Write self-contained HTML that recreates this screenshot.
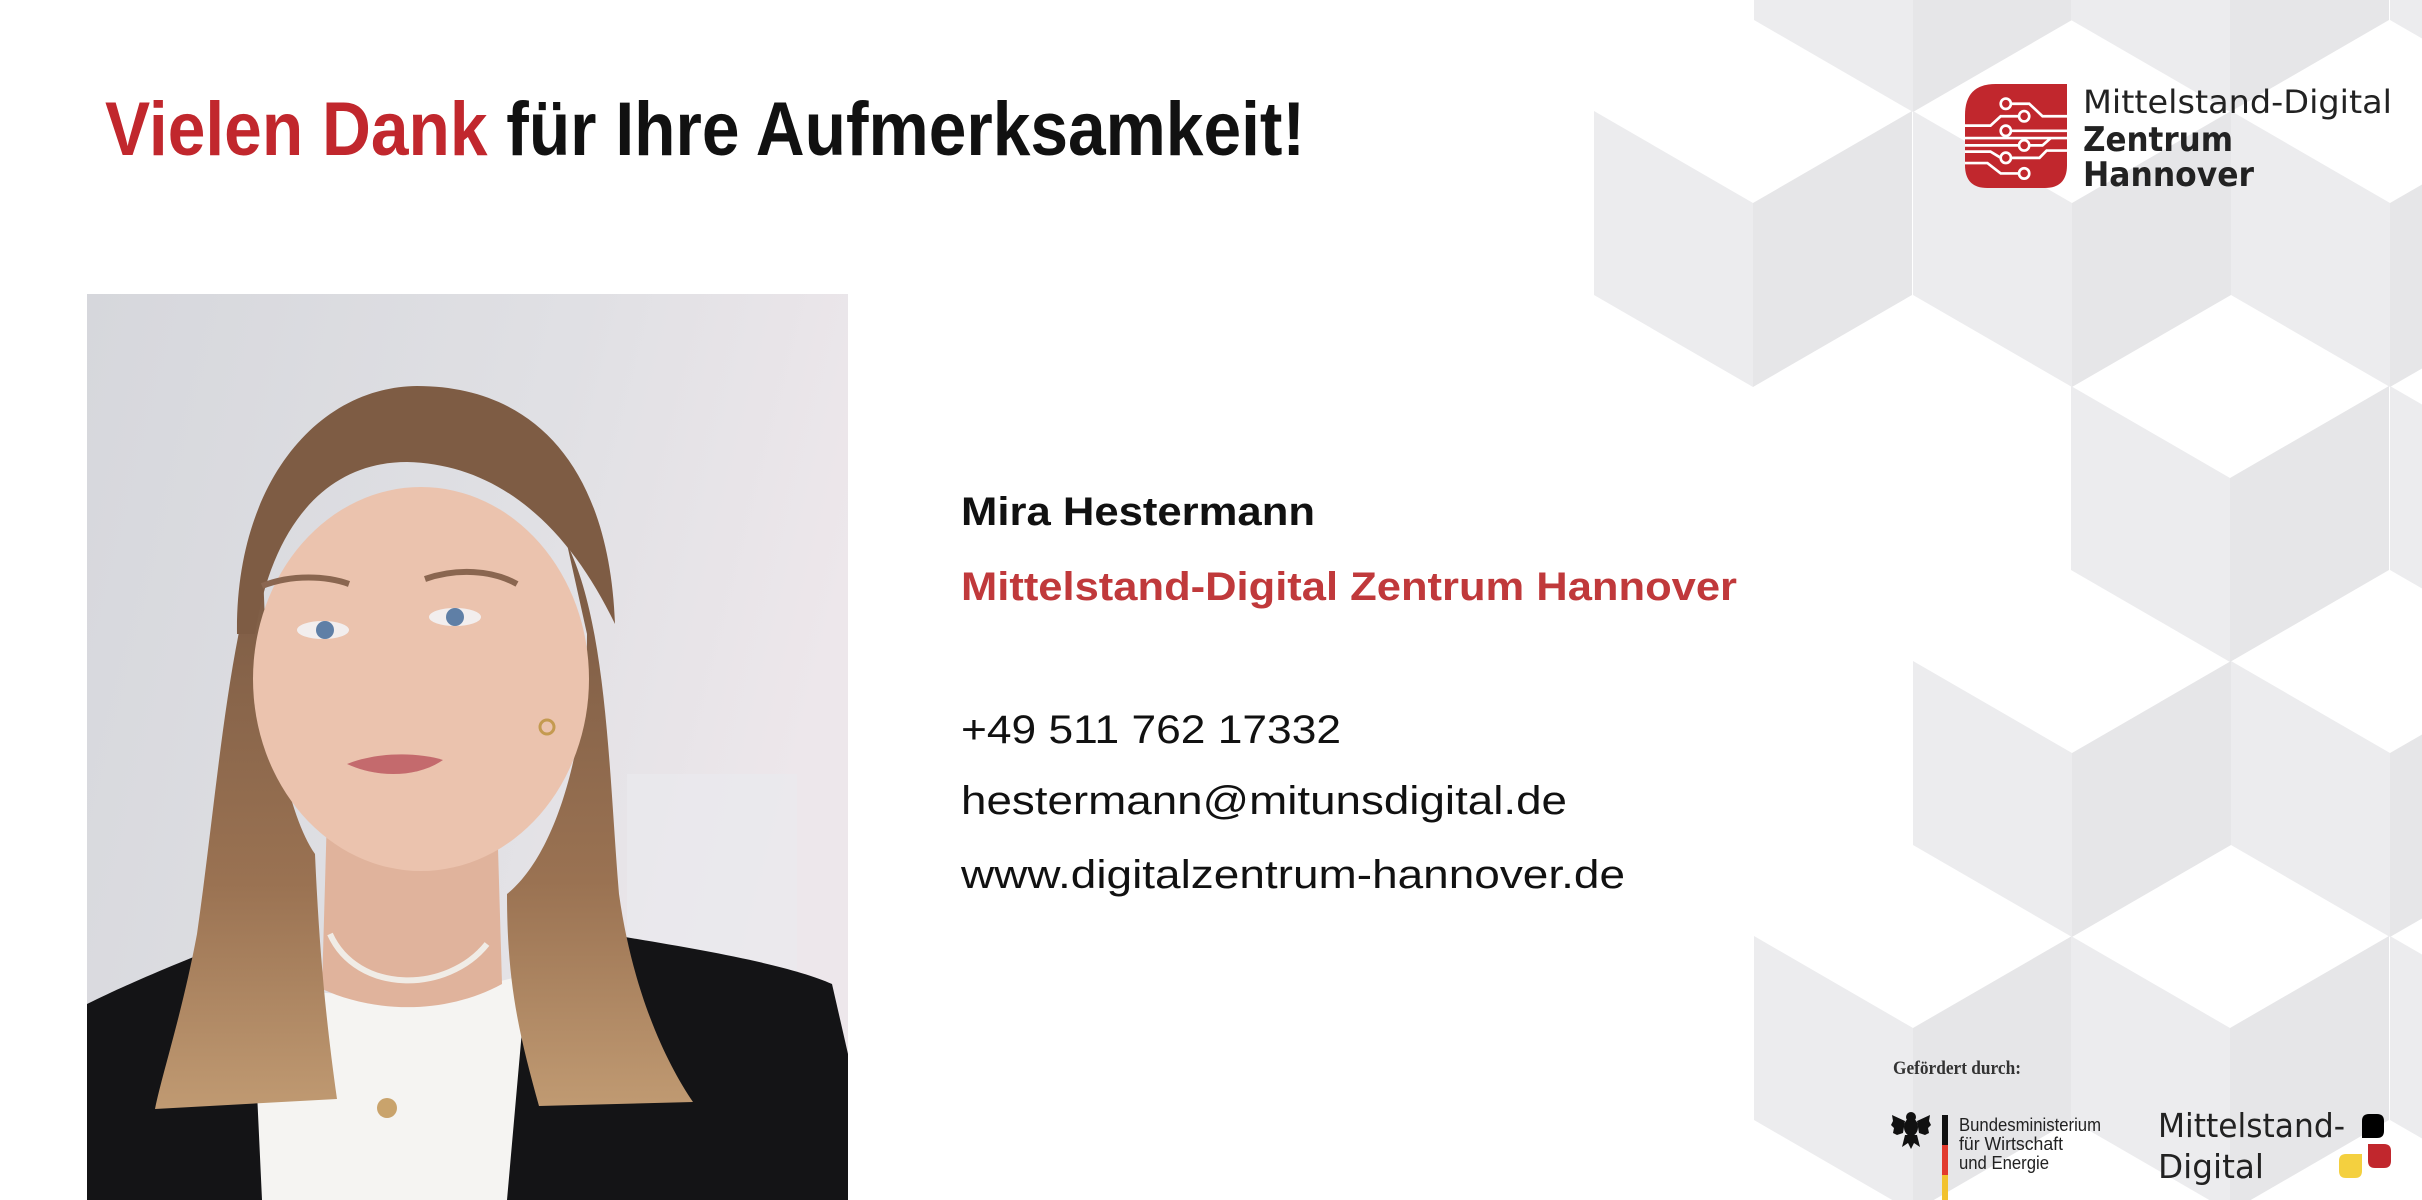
<!DOCTYPE html>
<html><head><meta charset="utf-8"><style>
html,body{margin:0;padding:0;background:#fff;width:2422px;height:1200px;overflow:hidden}
svg{display:block}
</style></head><body>
<svg width="2422" height="1200" viewBox="0 0 2422 1200" xmlns="http://www.w3.org/2000/svg">
<defs>
<g id="cube">
<polygon points="-159,92 0,184 0,368 -159,276" fill="#ececee"/>
<polygon points="0,184 159,92 159,276 0,368" fill="#e6e6e8"/>
</g>
<linearGradient id="bg" x1="0" y1="0" x2="1" y2="0.3">
<stop offset="0" stop-color="#d6d7dc"/><stop offset="0.6" stop-color="#e0e0e4"/><stop offset="1" stop-color="#ede7eb"/>
</linearGradient>
<linearGradient id="hair" x1="0" y1="0" x2="0" y2="1">
<stop offset="0" stop-color="#7a5a44"/><stop offset="0.6" stop-color="#9a7252"/><stop offset="1" stop-color="#c09a72"/>
</linearGradient>
<clipPath id="pc"><rect x="0" y="0" width="761" height="906"/></clipPath>
</defs>
<rect width="2422" height="1200" fill="#fff"/>
<!-- cubes -->
<use href="#cube" x="1913" y="-256"/><use href="#cube" x="2230" y="-256"/><use href="#cube" x="2549" y="-256"/>
<use href="#cube" x="1753" y="19"/><use href="#cube" x="2072" y="19"/><use href="#cube" x="2390" y="19"/>
<use href="#cube" x="2230" y="294"/><use href="#cube" x="2549" y="294"/>
<use href="#cube" x="2072" y="569"/><use href="#cube" x="2390" y="569"/>
<use href="#cube" x="1913" y="844"/><use href="#cube" x="2230" y="844"/><use href="#cube" x="2549" y="844"/>

<!-- title -->
<text x="105" y="155" font-family="Liberation Sans, sans-serif" font-weight="bold" font-size="76" textLength="1200" lengthAdjust="spacingAndGlyphs"><tspan fill="#c1272d">Vielen Dank</tspan><tspan fill="#111"> für Ihre Aufmerksamkeit!</tspan></text>

<!-- photo -->
<g transform="translate(87,294)" clip-path="url(#pc)">
<rect width="761" height="906" fill="url(#bg)"/>
<rect x="540" y="480" width="170" height="260" fill="#e9eaee" opacity="0.7"/>
<path d="M0,710 C40,690 100,665 140,650 L200,700 L180,906 L0,906Z" fill="#141416"/>
<path d="M430,690 L520,640 C610,655 700,670 745,690 L761,760 L761,906 L400,906Z" fill="#141416"/>
<path d="M165,690 C240,705 360,705 440,680 L420,906 L175,906Z" fill="#f5f4f2"/>
<path d="M240,520 L410,520 L415,690 C360,720 290,720 235,695Z" fill="#e0b39c"/>
<path d="M175,250 C140,350 130,500 110,640 C95,720 75,780 68,815 L250,805 C238,720 232,650 228,560 C200,520 182,420 178,330Z" fill="url(#hair)"/>
<path d="M480,250 C520,330 522,480 532,600 C546,700 580,770 606,808 L452,812 C432,740 420,690 420,600 C470,560 500,450 500,340Z" fill="url(#hair)"/>
<ellipse cx="334" cy="385" rx="168" ry="192" fill="#ebc3ae"/>
<path d="M150,340 C148,190 230,93 330,92 C445,92 522,170 528,330 C480,230 410,170 320,168 C240,168 185,230 168,340Z" fill="#7e5c44"/>
<path d="M175,292 C205,280 240,282 262,290" stroke="#8a6650" stroke-width="6" fill="none"/>
<path d="M338,285 C370,274 405,276 430,290" stroke="#8a6650" stroke-width="6" fill="none"/>
<ellipse cx="236" cy="336" rx="26" ry="9" fill="#f2eeee"/><circle cx="238" cy="336" r="9" fill="#5f7fa6"/>
<ellipse cx="368" cy="323" rx="26" ry="9" fill="#f2eeee"/><circle cx="368" cy="323" r="9" fill="#5f7fa6"/>
<path d="M260,470 C290,458 330,458 356,466 C330,484 290,484 260,470Z" fill="#c46a6d"/>
<path d="M243,640 C270,700 360,700 400,650" stroke="#f0ece6" stroke-width="6" fill="none"/>
<circle cx="300" cy="814" r="10" fill="#c9a36c"/>
<circle cx="460" cy="433" r="7" fill="none" stroke="#c49a50" stroke-width="3"/>
</g>

<!-- contact -->
<g font-family="Liberation Sans, sans-serif">
<text x="961" y="525" font-size="40" font-weight="bold" fill="#111" textLength="354" lengthAdjust="spacingAndGlyphs">Mira Hestermann</text>
<text x="961" y="600" font-size="40" font-weight="bold" fill="#c0393b" textLength="776" lengthAdjust="spacingAndGlyphs">Mittelstand-Digital Zentrum Hannover</text>
<text x="961" y="743" font-size="40" fill="#111" textLength="380" lengthAdjust="spacingAndGlyphs">+49 511 762 17332</text>
<text x="961" y="814" font-size="40" fill="#111" textLength="606" lengthAdjust="spacingAndGlyphs">hestermann@mitunsdigital.de</text>
<text x="961" y="888" font-size="40" fill="#111" textLength="664" lengthAdjust="spacingAndGlyphs">www.digitalzentrum-hannover.de</text>
</g>

<!-- logo -->
<g transform="translate(1965,84) scale(1.02,1.04)">
<path d="M30,0 L100,0 L100,78 Q100,100 78,100 L22,100 Q0,100 0,78 L0,30 Q0,0 30,0Z" fill="#c1272d"/>
<g stroke="#fff" stroke-width="2.6" fill="none">
<path d="M45,19 L63,19 L76,31 L100,31"/>
<path d="M53,31 L35,31 L25,40 L0,40"/>
<path d="M0,52 L100,52"/>
<path d="M45,45 L100,45"/>
<path d="M0,59 L53,59"/>
<path d="M63,59 L76,59 L84,52"/>
<path d="M45,71 L73,71 L80,64 L100,64"/>
<path d="M35,71 L25,65 L0,65"/>
<path d="M53,86 L35,86 L22,76 L0,76"/>
<circle cx="40" cy="19" r="5"/><circle cx="58" cy="31" r="5"/><circle cx="40" cy="45" r="5"/>
<circle cx="58" cy="59" r="5"/><circle cx="40" cy="71" r="5"/><circle cx="58" cy="86" r="5"/>
</g>
</g>
<g font-family="DejaVu Sans, Liberation Sans, sans-serif" fill="#222">
<text x="2083" y="113" font-size="32" textLength="309" lengthAdjust="spacingAndGlyphs">Mittelstand-Digital</text>
<text x="2083" y="151" font-size="34" font-weight="bold" textLength="150" lengthAdjust="spacingAndGlyphs">Zentrum</text>
<text x="2083" y="186" font-size="34" font-weight="bold" textLength="171" lengthAdjust="spacingAndGlyphs">Hannover</text>
</g>

<!-- funding -->
<text x="1893" y="1074" font-family="Liberation Serif, serif" font-weight="bold" font-size="19" fill="#333" textLength="128" lengthAdjust="spacingAndGlyphs">Gefördert durch:</text>
<g transform="translate(1911,1131)" fill="#111">
<ellipse cx="0" cy="-4" rx="7" ry="9"/>
<circle cx="0" cy="-14" r="5"/>
<path d="M-6,-10 L-19,-16 L-18,-10 L-20,-6 L-17,-3 L-18,2 L-14,4 L-8,2Z"/>
<path d="M6,-10 L19,-16 L18,-10 L20,-6 L17,-3 L18,2 L14,4 L8,2Z"/>
<path d="M-6,4 L-9,16 L-3,12 L0,18 L3,12 L9,16 L6,4Z"/>
</g>
<rect x="1942" y="1115" width="6" height="30" fill="#111"/>
<rect x="1942" y="1145" width="6" height="30" fill="#e23b2e"/>
<rect x="1942" y="1175" width="6" height="25" fill="#f2c22f"/>
<g font-family="Liberation Sans, sans-serif" font-size="18" fill="#222">
<text x="1959" y="1131" textLength="142" lengthAdjust="spacingAndGlyphs">Bundesministerium</text>
<text x="1959" y="1150" textLength="104" lengthAdjust="spacingAndGlyphs">für Wirtschaft</text>
<text x="1959" y="1169" textLength="90" lengthAdjust="spacingAndGlyphs">und Energie</text>
</g>
<g font-family="DejaVu Sans, Liberation Sans, sans-serif" font-size="33" fill="#222">
<text x="2158" y="1137" textLength="187" lengthAdjust="spacingAndGlyphs">Mittelstand-</text>
<text x="2158" y="1178" textLength="106" lengthAdjust="spacingAndGlyphs">Digital</text>
</g>
<path d="M2369,1114 L2377,1114 Q2384,1114 2384,1121 L2384,1131 Q2384,1138 2377,1138 L2362,1138 L2362,1121 Q2362,1114 2369,1114Z" fill="#000"/>
<path d="M2368,1144 L2384,1144 Q2391,1144 2391,1151 L2391,1161 Q2391,1168 2384,1168 L2375,1168 Q2368,1168 2368,1161Z" fill="#c1272d"/>
<path d="M2346,1154 L2362,1154 L2362,1171 Q2362,1178 2355,1178 L2346,1178 Q2339,1178 2339,1171 L2339,1161 Q2339,1154 2346,1154Z" fill="#f4d03f"/>
</svg>
</body></html>
